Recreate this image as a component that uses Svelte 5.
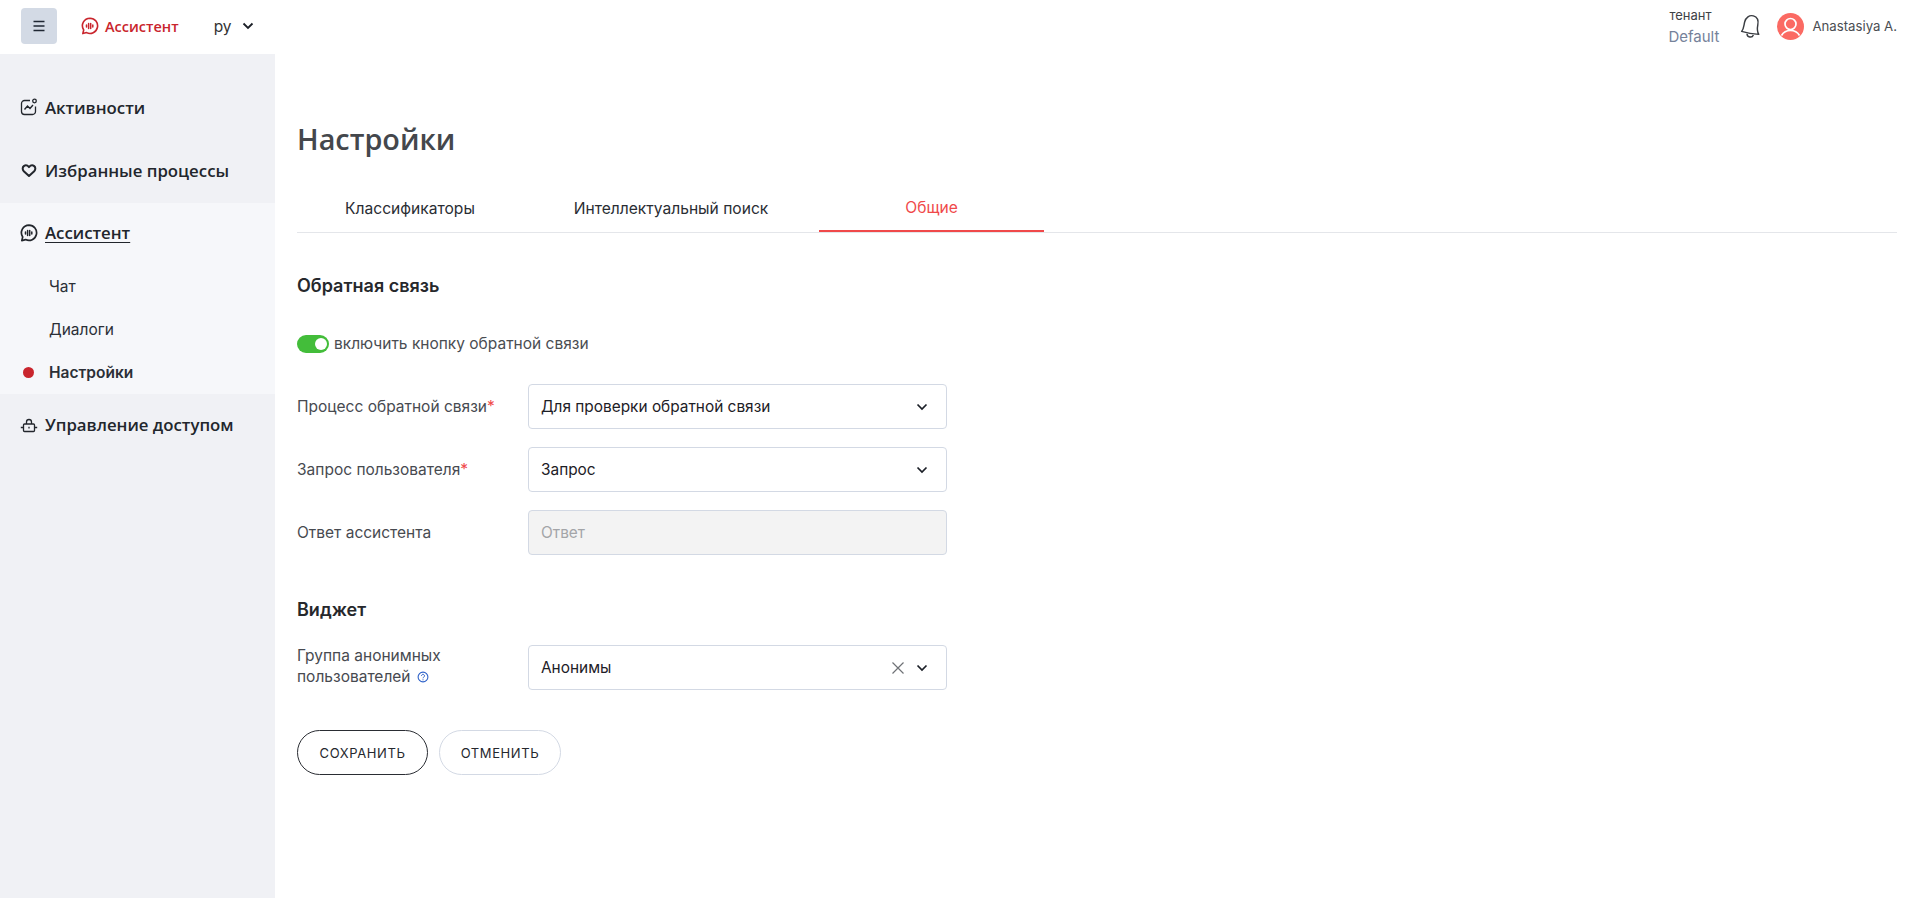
<script>
  const tabs = [
    { label: 'Классификаторы', width: 226 },
    { label: 'Интеллектуальный поиск', width: 296 },
    { label: 'Общие', width: 225, active: true }
  ];
</script>

<div class="page">
  <header class="topbar">
    <button class="menu" aria-label="menu">
      <svg width="14" height="12" viewBox="0 0 14 12"><path d="M1.500 1.500h11M1.500 6h11M1.500 10.500h11" stroke="#1f2733" stroke-width="1.600" fill="none"/></svg>
    </button>
    <div class="brand">
      <svg width="18" height="18" viewBox="0 0 18 18" fill="none"><path d="M9 1.200a7.600 7.600 0 1 1-3.400 14.400L1.800 16.600l.9-3.600A7.600 7.600 0 0 1 9 1.200z" stroke="#c9252d" stroke-width="1.600" stroke-linejoin="round"/><path d="M5.500 8v2M7.600 6.500v5M9.700 6.500v5M11.800 8v2" stroke="#c9252d" stroke-width="1.500" stroke-linecap="round"/></svg>
      <span>Ассистент</span>
    </div>
    <div class="lang">
      <span>ру</span>
      <svg width="12" height="8" viewBox="0 0 12 8" fill="none"><path d="M1.500 1.500 6 6l4.500-4.500" stroke="#1b1f27" stroke-width="1.800"/></svg>
    </div>
    <div class="spacer"></div>
    <div class="tenant"><span class="t1">тенант</span><span class="t2">Default</span></div>
    <svg class="bell" width="22" height="24" viewBox="3 3 17 20" fill="none" stroke="#3a3d42" stroke-width="1.200" stroke-linejoin="round"><path d="M4.500 17.500c2-2 1.800-5 2.600-8C8 6 11 3.600 14.300 4.600c3.200 1 4.400 4 3.700 7.400-.6 3-.6 5.600.8 8-5-.4-10-1.300-14.300-2.500z"/><path d="M9 19.500c0 3 4.300 3.800 5.300 1"/></svg>
    <div class="avatar">
      <svg width="27" height="27" viewBox="0 0 27 27"><circle cx="13.500" cy="13.500" r="13.500" fill="#fb6a63"/><circle cx="13.500" cy="11" r="5.500" fill="none" stroke="#fff" stroke-width="1.700"/><path d="M4.500 22.500c2-3.500 5-5 9-5s7 1.500 9 5" fill="none" stroke="#fff" stroke-width="1.700"/></svg>
    </div>
    <span class="user">Anastasiya A.</span>
  </header>

  <div class="body">
    <aside class="sidebar">
      <div class="nav-top">
        <a class="nav-item">
          <svg width="18" height="18" viewBox="0 0 18 18" fill="none" stroke="#22262c" stroke-width="1.300"><path d="M10 2.500H4.500a3 3 0 0 0-3 3v8a3 3 0 0 0 3 3h8a3 3 0 0 0 3-3V8.500"/><circle cx="14.500" cy="3" r="1.800"/><path d="M4.500 11.500 7.500 8l2.500 2.500 3-3.500" stroke-width="1.400"/></svg>
          <span>Активности</span>
        </a>
        <a class="nav-item">
          <svg width="18" height="18" viewBox="0 0 18 18" fill="none" stroke="#22262c" stroke-width="2"><path d="M9 15 3.800 10.200C2.200 8.500 2.400 6.200 3.800 5.100c1.600-1.200 3.800-.7 5.200 1 1.400-1.700 3.600-2.200 5.200-1 1.400 1.100 1.600 3.400 0 5.100z" stroke-linejoin="round"/></svg>
          <span>Избранные процессы</span>
        </a>
      </div>
      <div class="nav-active">
        <a class="nav-item current">
          <svg width="18" height="18" viewBox="0 0 18 18" fill="none" stroke="#22262c"><path d="M9 1.200a7.600 7.600 0 1 1-3.400 14.400L1.800 16.600l.9-3.600A7.600 7.600 0 0 1 9 1.200z" stroke-width="1.700" stroke-linejoin="round"/><path d="M5.500 8v2M7.600 6.500v5M9.700 6.500v5M11.800 8v2" stroke-width="1.500" stroke-linecap="round"/></svg>
          <span>Ассистент</span>
        </a>
        <a class="sub sub-first">Чат</a>
        <a class="sub">Диалоги</a>
        <a class="sub selected"><i class="dot"></i>Настройки</a>
      </div>
      <a class="nav-item last">
        <svg width="18" height="18" viewBox="0 0 18 18" fill="none" stroke="#22262c" stroke-width="1.300"><rect x="3.500" y="8" width="11" height="7.500" rx="1"/><path d="M6.500 8V6a2.500 2.500 0 0 1 5 0v2M.8 11.500h2.700M14.500 11.500h2.700M9 10.800v1.800"/></svg>
        <span>Управление доступом</span>
      </a>
    </aside>

    <main class="main">
      <h1>Настройки</h1>
      <nav class="tabs">
        {#each tabs as t}
          <div class="tab" class:active={t.active} style="width:{t.width}px">{t.label}</div>
        {/each}
      </nav>

      <h2 class="feedback">Обратная связь</h2>
      <div class="toggle-row">
        <span class="toggle"><i></i></span>
        <span>включить кнопку обратной связи</span>
      </div>

      <div class="rows">
        <div class="row">
          <div class="label">Процесс обратной связи<em>*</em></div>
          <div class="control"><span>Для проверки обратной связи</span><svg class="chev" width="12" height="8" viewBox="0 0 12 8" fill="none"><path d="M1.500 1.500 6 6l4.500-4.500" stroke="#1b1f27" stroke-width="1.700"/></svg></div>
        </div>
        <div class="row">
          <div class="label">Запрос пользователя<em>*</em></div>
          <div class="control"><span>Запрос</span><svg class="chev" width="12" height="8" viewBox="0 0 12 8" fill="none"><path d="M1.500 1.500 6 6l4.500-4.500" stroke="#1b1f27" stroke-width="1.700"/></svg></div>
        </div>
        <div class="row">
          <div class="label">Ответ ассистента</div>
          <div class="control disabled"><span>Ответ</span></div>
        </div>
      </div>

      <h2 class="widget">Виджет</h2>
      <div class="row">
        <div class="label two">Группа анонимных пользователей <svg class="help" width="12" height="12" viewBox="0 0 12 12" fill="none" stroke="#2f62c9"><circle cx="6" cy="6" r="4.900" stroke-width="1.100"/><path d="M4.500 4.800a1.500 1.500 0 1 1 2.300 1.300c-.6.4-.8.6-.8 1.200" stroke-width="1"/><path d="M6 8.300v1" stroke-width="1"/></svg></div>
        <div class="control"><span>Анонимы</span>
          <svg class="clear" width="14" height="14" viewBox="0 0 14 14" fill="none"><path d="M1.500 1.500l11 11M12.500 1.500l-11 11" stroke="#6f7276" stroke-width="1.200"/></svg>
          <svg class="chev" width="12" height="8" viewBox="0 0 12 8" fill="none"><path d="M1.500 1.500 6 6l4.500-4.500" stroke="#1b1f27" stroke-width="1.700"/></svg>
        </div>
      </div>

      <div class="actions">
        <button class="btn primary">СОХРАНИТЬ</button>
        <button class="btn">ОТМЕНИТЬ</button>
      </div>
    </main>
  </div>
</div>

<style>
  :global(body) { margin: 0; background: #fff; }
  .page { width: 1919px; height: 898px; display: flex; flex-direction: column; overflow: hidden; font-family: Inter, "Noto Sans", sans-serif; color: #1f2329; }
  .topbar { height: 54px; flex: none; display: flex; align-items: center; padding: 0 22px 2px 21px; box-sizing: border-box; }
  .menu { width: 36px; height: 36px; border: 0; border-radius: 4px; background: #d3dae5; display: flex; align-items: center; justify-content: center; padding: 0; }
  .brand { margin-left: 24px; display: flex; align-items: center; gap: 6px; color: #c9252d; font-size: 14.500px; font-weight: 600; font-family: "Open Sans", sans-serif; }
  .lang { margin-left: 35px; display: flex; align-items: center; gap: 10px; font-size: 15.500px; color: #333; }
  .spacer { flex: 1; }
  .tenant { display: flex; flex-direction: column; font-size: 13px; line-height: 21px; width: 71px; }
  .t1 { color: #3d4146; margin-left: 1px; }
  .t2 { color: #75829a; font-size: 15px; }
  .bell { margin-right: 16px; }
  .avatar { width: 27px; height: 27px; }
  .user { margin-left: 8px; font-size: 13.200px; color: #4a4d52; }

  .body { flex: 1; display: flex; min-height: 0; }
  .sidebar { width: 275px; flex: none; background: #f0f1f5; display: flex; flex-direction: column; }
  .nav-top { padding-top: 22px; padding-bottom: 2px; }
  .nav-item { height: 62px; display: flex; align-items: center; gap: 7px; padding-left: 20px; font-family: "Open Sans", sans-serif; font-size: 16.800px; font-weight: 600; color: #22262c; }
  .nav-item + .nav-item { margin-top: 1px; }
  .nav-active { background: #f6f7fa; height: 191px; }
  .current { height: 59px; }
  .current span { text-decoration: underline; text-underline-offset: 3px; }
  .sub { display: flex; align-items: center; height: 43px; padding-left: 49px; font-size: 15.500px; color: #2b2f36; position: relative; }
  .sub-first { margin-top: 3px; }
  .selected { font-weight: 600; }
  .dot { position: absolute; left: 23px; width: 11px; height: 11px; border-radius: 50%; background: #c9252d; }
  .last { height: 61px; }

  .main { flex: 1; padding: 0 22px 0 22px; min-width: 0; }
  h1 { margin: 68px 0 0; font-size: 28.800px; line-height: 34px; font-weight: 600; color: #44474c; font-family: "Open Sans", sans-serif; }
  .tabs { margin-top: 25px; height: 51px; display: flex; border-bottom: 1px solid #e4e6ea; }
  .tab { height: 51px; padding-top: 4px; display: flex; align-items: center; justify-content: center; font-size: 15.600px; color: #2a2d33; box-sizing: border-box; flex: none; }
  .tab.active { color: #f0494a; border-bottom: 2px solid #f0494a; }
  h2 { margin: 0; font-size: 18px; font-weight: 600; line-height: 20px; color: #26282c; }
  .feedback { margin-top: 43px; }
  .toggle-row { margin-top: 39px; display: flex; align-items: center; gap: 5px; height: 18px; font-size: 15.500px; color: #4a4d52; }
  .toggle-row span:last-child { margin-top: -2px; }
  .toggle { width: 32px; height: 18px; border-radius: 9px; background: #43bd3a; position: relative; flex: none; }
  .toggle i { position: absolute; right: 2px; top: 3px; width: 12px; height: 12px; border-radius: 50%; background: #fff; }
  .rows { margin-top: 31px; display: flex; flex-direction: column; gap: 18px; }
  .row { display: flex; align-items: center; height: 45px; }
  .label { width: 231px; flex: none; font-size: 15.500px; line-height: 21px; color: #474a50; margin-top: -1px; }
  .label em { color: #f0494a; font-style: normal; }
  .two { width: 170px; margin-right: 61px; margin-top: -3px; }
  .help { vertical-align: -1px; margin-left: 2px; }
  .control { width: 419px; height: 45px; box-sizing: border-box; border: 1px solid #d3d9e4; border-radius: 4px; display: flex; align-items: center; padding: 0 18px 0 12px; font-size: 15.400px; color: #1d2026; background: #fff; }
  .control span { flex: 1; }
  .disabled { background: #f3f3f3; color: #a3a5a8; }
  .clear { margin-right: 11px; }
  .widget { margin-top: 45px; margin-bottom: 25px; }
  .actions { margin-top: 40px; display: flex; gap: 11px; }
  .btn { height: 45px; border-radius: 23px; background: #fff; border: 1px solid #d3d9e4; padding: 0; width: 122px; font-family: Inter, sans-serif; font-size: 13px; letter-spacing: 0.6px; color: #25282e; }
  .primary { width: 131px; border-color: #2a2d33; }
</style>
